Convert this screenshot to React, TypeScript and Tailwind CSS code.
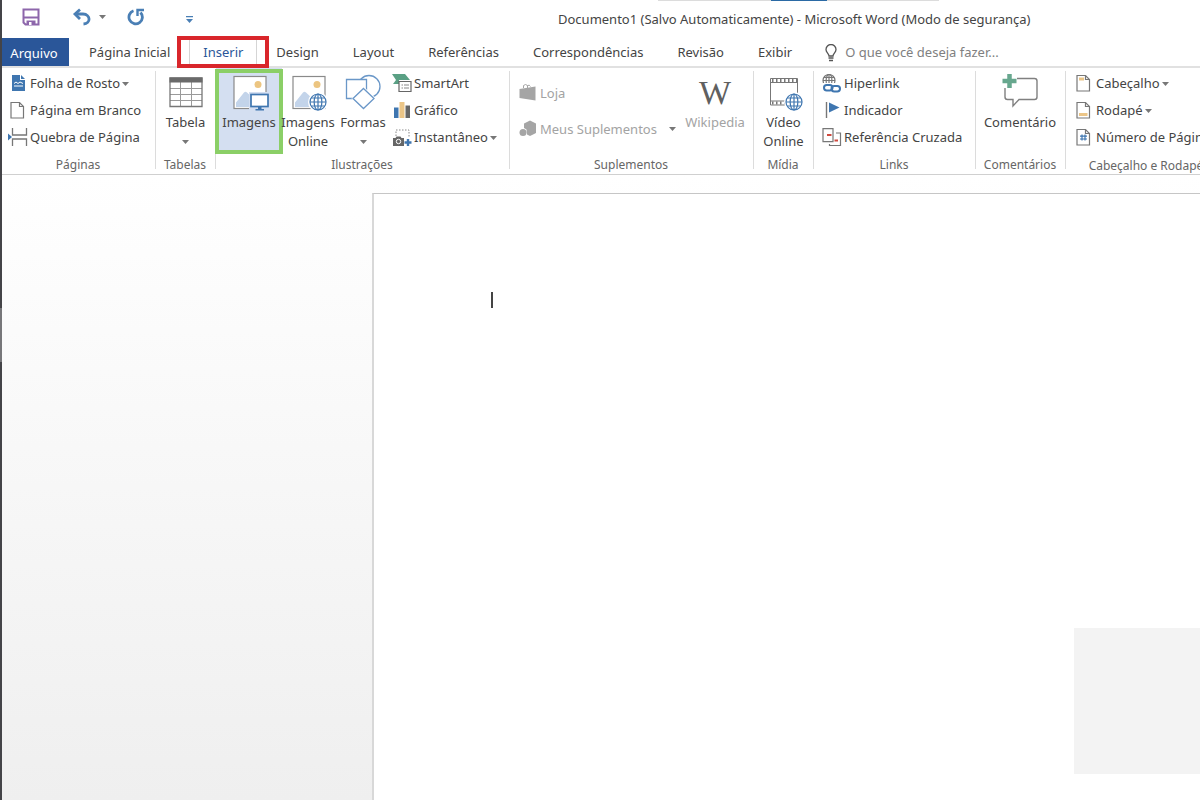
import type { ReactNode } from "react";

const tabs = [
  "Página Inicial",
  "Inserir",
  "Design",
  "Layout",
  "Referências",
  "Correspondências",
  "Revisão",
  "Exibir",
];

const Caret = ({ className = "" }: { className?: string }) => (
  <svg className={`shrink-0 ${className}`} width="7" height="4" viewBox="0 0 7 4">
    <path d="M0 0h7L3.5 4z" fill="#777" />
  </svg>
);

const SmallIcon = ({ children }: { children: ReactNode }) => (
  <svg className="shrink-0" width="20" height="20" viewBox="0 0 20 20" fill="none">
    {children}
  </svg>
);

const LargeIcon = ({ children }: { children: ReactNode }) => (
  <svg className="shrink-0" width="40" height="38" viewBox="0 0 40 38" fill="none">
    {children}
  </svg>
);

const Globe = ({ cx, cy, r, color }: { cx: number; cy: number; r: number; color: string }) => (
  <g stroke={color} strokeWidth="1.2">
    <circle cx={cx} cy={cy} r={r} fill="#fff" />
    <ellipse cx={cx} cy={cy} rx={r * 0.48} ry={r} />
    <path d={`M${cx - r} ${cy}h${r * 2}M${cx} ${cy - r}v${r * 2}`} />
    <path d={`M${cx - r * 0.85} ${cy - r / 2}h${r * 1.7}M${cx - r * 0.85} ${cy + r / 2}h${r * 1.7}`} />
  </g>
);

const Picture = () => (
  <>
    <rect x="5" y="2.5" width="32" height="32" fill="#fff" stroke="#8a8a8a" strokeWidth="1.2" />
    <circle cx="29" cy="10.5" r="3.5" fill="#ecc581" />
    <path d="M7 33V28.500L15 18.500q1.500-1.500 3 0L25 25v8z" fill="#c3d4ea" />
  </>
);

const Sheet = ({ children }: { children?: ReactNode }) => (
  <SmallIcon>
    <path d="M3 1.500h8.500l4 4V17H3z" fill="#fff" stroke="#777" strokeWidth="1.2" />
    <path d="M11.500 1.500v4h4" stroke="#777" strokeWidth="1.2" />
    {children}
  </SmallIcon>
);

const RowButton = ({
  icon,
  label,
  caret,
  disabled,
}: {
  icon: ReactNode;
  label: string;
  caret?: boolean;
  disabled?: boolean;
}) => (
  <button
    disabled={disabled}
    className="flex h-[27px] items-center gap-[2px] whitespace-nowrap disabled:h-9 disabled:text-[#a3a3a3]"
  >
    {icon}
    <span className="pt-px">{label}</span>
    {caret && <Caret className={disabled ? "ml-[10px]" : ""} />}
  </button>
);

const LargeButton = ({
  icon,
  label,
  caret,
  className = "",
}: {
  icon: ReactNode;
  label: ReactNode;
  caret?: boolean;
  className?: string;
}) => (
  <button
    className={`relative flex shrink-0 flex-col items-center pt-[6px] leading-[19px] whitespace-nowrap ${className}`}
  >
    {icon}
    <span className="mt-px">{label}</span>
    {caret && <Caret className="mt-2" />}
  </button>
);

const Group = ({
  title,
  className = "",
  children,
}: {
  title: string;
  className?: string;
  children: ReactNode;
}) => (
  <section className={`relative flex shrink-0 flex-col ${className}`}>
    <div className="flex h-[88px]">{children}</div>
    <h2 className="pr-[2px] text-center text-xs leading-[19px] whitespace-nowrap text-[#666]">{title}</h2>
    <span className="absolute top-[3px] right-0 bottom-[5px] w-px bg-[#dcdcdc] in-[.last-group]:hidden" />
  </section>
);

const TitleBar = () => (
  <header className="relative flex h-[38px] shrink-0 items-center">
    <div className="flex items-center pb-1 pl-[20px]">
      <button aria-label="Salvar">
        <svg width="18" height="18" viewBox="0 0 18 18" fill="none">
          <path d="M1.500 1.500h15v15h-13l-2-2z" stroke="#8d66ab" strokeWidth="2" />
          <path d="M2 9.500h14" stroke="#8d66ab" strokeWidth="2" />
          <path d="M4.500 17v-4.500h9V17z" fill="#8d66ab" />
          <path d="M7 14h2.500v3H7z" fill="#fff" />
        </svg>
      </button>
      <button aria-label="Desfazer" className="ml-[32px]">
        <svg width="19" height="18" viewBox="0 0 19 18" fill="none">
          <path d="M8 1.500L3 6l5 5" stroke="#4a7fb5" strokeWidth="2.800" />
          <path d="M3 6h8c8 .5 8 9.500.5 10" stroke="#4a7fb5" strokeWidth="2.800" />
        </svg>
      </button>
      <button aria-label="Opções de desfazer" className="ml-2">
        <Caret />
      </button>
      <button aria-label="Refazer" className="ml-[21px]">
        <svg width="18" height="18" viewBox="0 0 18 18" fill="none">
          <path d="M6.500 2.800A6.700 6.700 0 1 0 13.500 4.500" stroke="#4a7fb5" strokeWidth="2.800" />
          <path d="M17 2h-6.500v6" stroke="#4a7fb5" strokeWidth="2.400" />
        </svg>
      </button>
      <button aria-label="Personalizar barra" className="mt-1 ml-[41px]">
        <svg width="7" height="7" viewBox="0 0 7 7">
          <path d="M0 0h7v1.300H0zM0 3h7L3.500 7z" fill="#4a7fb5" />
        </svg>
      </button>
    </div>
    <h1 className="ml-[365px] pt-px whitespace-nowrap">
      Documento1 (Salvo Automaticamente) - Microsoft Word (Modo de segurança)
    </h1>
    <div className="absolute top-0 left-[656px] flex h-px w-[281px] justify-center bg-[#dcdcdc]">
      <span className="w-14 bg-[#2b6aa5]" />
    </div>
  </header>
);

const TabBar = () => (
  <nav className="flex h-[30px] shrink-0 items-stretch border-b-2 border-[#e1e1e1]">
    <button className="mr-[3px] w-[67px] shrink-0 bg-[#2a5699] pt-[3px] pr-[3px] text-white">Arquivo</button>
    {tabs.map((tab) =>
      tab === "Inserir" ? (
        <button key={tab} className="relative shrink-0 px-4 pt-px text-[#2a5699]">
          <span className="absolute inset-x-[2px] inset-y-0 border-x border-[#d5d5d5]" />
          {tab}
          <span className="absolute -inset-x-[10px] -top-[2px] -bottom-[2px] z-10 border-4 border-[#d9262b]" />
        </button>
      ) : (
        <button key={tab} className="shrink-0 px-[17px] pt-px">
          {tab}
        </button>
      )
    )}
    <label className="ml-4 flex flex-1 items-center gap-2 pt-px">
      <svg className="shrink-0" width="12" height="18" viewBox="0 0 12 18" fill="none" stroke="#555">
        <path d="M4 12c0-2.500-3-3.500-3-6.500a5 5 0 0 1 10 0c0 3-3 4-3 6.500z" strokeWidth="1.300" />
        <path d="M3.500 14h5M4 16.500h4" strokeWidth="1.600" />
      </svg>
      <input
        aria-label="O que você deseja fazer"
        placeholder="O que você deseja fazer..."
        className="w-full min-w-0 outline-none placeholder:text-[#808080]"
      />
    </label>
  </nav>
);

const Ribbon = () => (
  <div className="flex h-[107px] shrink-0 overflow-hidden border-b border-[#d0d0d0]">
    <Group title="Páginas" className="w-[154px]">
      <div className="flex flex-col pt-[2px] pl-[6px]">
        <RowButton
          caret
          label="Folha de Rosto"
          icon={
            <SmallIcon>
              <path d="M4 1h8v5h5v11H4z" fill="#3f76b0" />
              <path d="M13 1l4 4h-4z" fill="#3f76b0" />
              <path d="M6 9.500l2-1.500 2 1.500 2-1.500 3 1.500M6 12h9" stroke="#fff" />
            </SmallIcon>
          }
        />
        <RowButton label="Página em Branco" icon={<Sheet />} />
        <RowButton
          label="Quebra de Página"
          icon={
            <SmallIcon>
              <path d="M4.500 0v7h14V0M4.500 18v-7h14v7" stroke="#777" strokeWidth="1.300" />
              <path d="M0 5.500L4 9l-4 3.500z" fill="#3f76b0" />
            </SmallIcon>
          }
        />
      </div>
    </Group>

    <Group title="Tabelas" className="w-[60px]">
      <LargeButton
        caret
        label="Tabela"
        className="w-[59px]"
        icon={
          <LargeIcon>
            <path d="M14.500 8v24M25.500 8v24M4 14.500h32M4 20.500h32M4 26.500h32" stroke="#9a9a9a" />
            <path d="M4 4h32v28.500H4z" stroke="#777" strokeWidth="1.300" />
            <path d="M3.500 3.500h33v5h-33z" fill="#6a6a6a" />
          </LargeIcon>
        }
      />
    </Group>

    <Group title="Ilustrações" className="w-[294px]">
      <LargeButton
        label="Imagens"
        className="h-[86px] w-[66px] bg-[#d4dff1]"
        icon={
          <>
            <LargeIcon>
              <Picture />
              <path d="M20 18h20v20H20z" fill="#d4dff1" />
              <rect x="22" y="20.500" width="17" height="12" fill="#fff" stroke="#3f76b0" strokeWidth="1.700" />
              <path d="M29 33h3.500v2H35v1.500h-8.500V35H29z" fill="#3f76b0" />
            </LargeIcon>
            <span className="absolute -inset-x-px top-px bottom-0 border-4 border-[#8bcf67]" />
          </>
        }
      />
      <LargeButton
        label={
          <>
            Imagens
            <br />
            Online
          </>
        }
        className="w-[52px]"
        icon={
          <LargeIcon>
            <Picture />
            <circle cx="30" cy="28" r="10" fill="#fff" />
            <Globe cx={30} cy={28} r={8} color="#3f76b0" />
          </LargeIcon>
        }
      />
      <LargeButton
        caret
        label="Formas"
        className="w-[58px]"
        icon={
          <LargeIcon>
            <circle cx="26" cy="12.500" r="11" stroke="#6a97c8" strokeWidth="1.300" />
            <path d="M3.500 5.500h20v19h-20z" fill="#fff" stroke="#6a97c8" strokeWidth="1.300" />
            <path d="M20.500 12.500L33 24.500 20.500 36 8.500 24.500z" fill="#fff" />
            <path d="M20.500 14.500L31 24.500 20.500 34.500 10 24.500z" fill="#fff" stroke="#6a97c8" strokeWidth="1.300" />
          </LargeIcon>
        }
      />
      <div className="flex flex-col pt-[2px]">
        <RowButton
          label="SmartArt"
          icon={
            <SmallIcon>
              <path d="M0 0h13l5 6H7v4H1l3-4z" fill="#5aa084" />
              <path d="M7 7.500h12v10H7z" fill="#fff" stroke="#666" strokeWidth="1.200" />
              <path d="M9.500 11h1.500M12 11h5M9.500 14h1.500M12 14h5" stroke="#888" />
            </SmallIcon>
          }
        />
        <RowButton
          label="Gráfico"
          icon={
            <SmallIcon>
              <path d="M2 6.500h4.500V17H2z" fill="#3f76b0" />
              <path d="M7.500 1h5v16h-5z" fill="#ebc587" />
              <path d="M13.500 4.500H18V17h-4.500z" fill="#666" />
            </SmallIcon>
          }
        />
        <RowButton
          caret
          label="Instantâneo"
          icon={
            <SmallIcon>
              <path d="M4 8V2h13v8" stroke="#888" strokeDasharray="1.500 1.500" />
              <path d="M1 10h2.500l1-1.500h4l1 1.500H12v8H1z" fill="#666" />
              <circle cx="6.500" cy="13.500" r="2.200" stroke="#fff" />
              <path d="M16 11v7M12.500 14.500h7" stroke="#3f76b0" strokeWidth="2.400" />
            </SmallIcon>
          }
        />
      </div>
    </Group>

    <Group title="Suplementos" className="w-[244px]">
      <div className="flex flex-1 flex-col pt-[7px] pl-2">
        <RowButton
          disabled
          label="Loja"
          icon={
            <SmallIcon>
              <path d="M1.500 6l16-2.500v14L1.500 15z" fill="#a5a5a5" />
              <path d="M5.500 5V2.500q2-2 4 0V5M9.500 2.500q2-1 3 1" stroke="#a5a5a5" />
            </SmallIcon>
          }
        />
        <RowButton
          disabled
          caret
          label="Meus Suplementos"
          icon={
            <SmallIcon>
              <path d="M6 4.500L12 1.500l6 3v9.500L12 17l-3-1.500-.5-5L6 9z" fill="#a5a5a5" />
              <circle cx="5" cy="13.500" r="3.500" fill="#a5a5a5" />
            </SmallIcon>
          }
        />
      </div>
      <LargeButton
        label="Wikipedia"
        className="w-[78px] text-[#a3a3a3]"
        icon={
          <span className="flex h-[38px] items-center pb-[2px] font-['Liberation_Serif',serif] text-[34px] text-[#606060]">
            W
          </span>
        }
      />
    </Group>

    <Group title="Mídia" className="w-[60px]">
      <LargeButton
        label={
          <>
            Vídeo
            <br />
            Online
          </>
        }
        className="w-[59px]"
        icon={
          <LargeIcon>
            <path d="M6.500 4.500h27v26.500h-27z" fill="#fff" stroke="#777" />
            <path d="M6.500 8.500h27M6.500 27h27" stroke="#777" strokeWidth="1.200" />
            <path d="M8 6.500h25M8 29h18" stroke="#777" strokeWidth="3" strokeDasharray="1.500 2.500" />
            <circle cx="30" cy="28" r="10" fill="#fff" />
            <Globe cx={30} cy={28} r={8} color="#3f76b0" />
          </LargeIcon>
        }
      />
    </Group>

    <Group title="Links" className="w-[162px]">
      <div className="flex flex-col pt-[2px] pl-2">
        <RowButton
          label="Hiperlink"
          icon={
            <SmallIcon>
              <Globe cx={7} cy={6.5} r={6} color="#777" />
              <path d="M0 9h20v10H0z" fill="#fff" />
              <rect x="2" y="11" width="8.500" height="5.500" rx="2.700" stroke="#3f76b0" strokeWidth="2" />
              <rect x="9.500" y="12" width="8.500" height="5.500" rx="2.700" stroke="#3f76b0" strokeWidth="2" />
            </SmallIcon>
          }
        />
        <RowButton
          label="Indicador"
          icon={
            <SmallIcon>
              <path d="M4.500 1v16" stroke="#777" strokeWidth="1.400" />
              <path d="M7 1.500L17.500 6.500 7 11.500z" fill="#3f76b0" />
            </SmallIcon>
          }
        />
        <RowButton
          label="Referência Cruzada"
          icon={
            <SmallIcon>
              <path d="M1 .7h10v13H1z" stroke="#777" strokeWidth="1.200" />
              <path d="M14 5h4.500v12.500h-11V16" stroke="#777" strokeWidth="1.200" />
              <path d="M5 7h4.500M12.500 12.500H16" stroke="#cf4a3f" strokeWidth="1.800" />
            </SmallIcon>
          }
        />
      </div>
    </Group>

    <Group title="Comentários" className="w-[90px]">
      <LargeButton
        label="Comentário"
        className="w-[88px]"
        icon={
          <LargeIcon>
            <path d="M17 4.500h17.500q2.500 0 2.500 2.500v16q0 2.500-2.500 2.500H19l-6 6.500v-6.500H7.500Q5 25.500 5 23V14" stroke="#808080" strokeWidth="1.400" />
            <path d="M9.500 0v14M2.500 7h14" stroke="#67a78e" strokeWidth="4.500" />
          </LargeIcon>
        }
      />
    </Group>

    <div className="last-group shrink-0">
      <Group title="Cabeçalho e Rodapé" className="w-[162px]">
        <div className="flex flex-col pt-[2px] pl-2">
          <RowButton
            caret
            label="Cabeçalho"
            icon={
              <Sheet>
                <path d="M5 5h5" stroke="#ebc587" strokeWidth="3" />
              </Sheet>
            }
          />
          <RowButton
            caret
            label="Rodapé"
            icon={
              <Sheet>
                <path d="M5 13.500h8.500" stroke="#ebc587" strokeWidth="3" />
              </Sheet>
            }
          />
          <RowButton
            caret
            label="Número de Página"
            icon={
              <Sheet>
                <path d="M8 6.500v6M11 6.500v6M6 8.200h7M6 11h7" stroke="#3f76b0" strokeWidth="1.200" />
              </Sheet>
            }
          />
        </div>
      </Group>
    </div>
  </div>
);

export default function App() {
  return (
    <div className="flex min-h-screen overflow-hidden bg-white font-['Noto_Sans','Open_Sans',sans-serif] text-[13px] text-[#444]">
      <div className="flex w-[2px] shrink-0 flex-col bg-[#444448] pt-[308px]">
        <span className="h-[54px] bg-[#77777a]" />
      </div>
      <div className="flex min-w-0 flex-1 flex-col">
        <TitleBar />
        <TabBar />
        <Ribbon />
        <main className="relative flex flex-1 bg-linear-to-b from-white to-[#efefef] pt-[18px] pl-[370px]">
          <article className="flex-1 border-t border-l-2 border-t-[#c6c6c6] border-l-[#d8d8d8] bg-white pt-[98px] pl-[117px]">
            <div className="h-4 w-[2px] bg-[#444]" />
          </article>
          <div className="absolute right-0 bottom-[26px] h-[146px] w-[126px] bg-[#f3f3f3]" />
        </main>
      </div>
    </div>
  );
}
